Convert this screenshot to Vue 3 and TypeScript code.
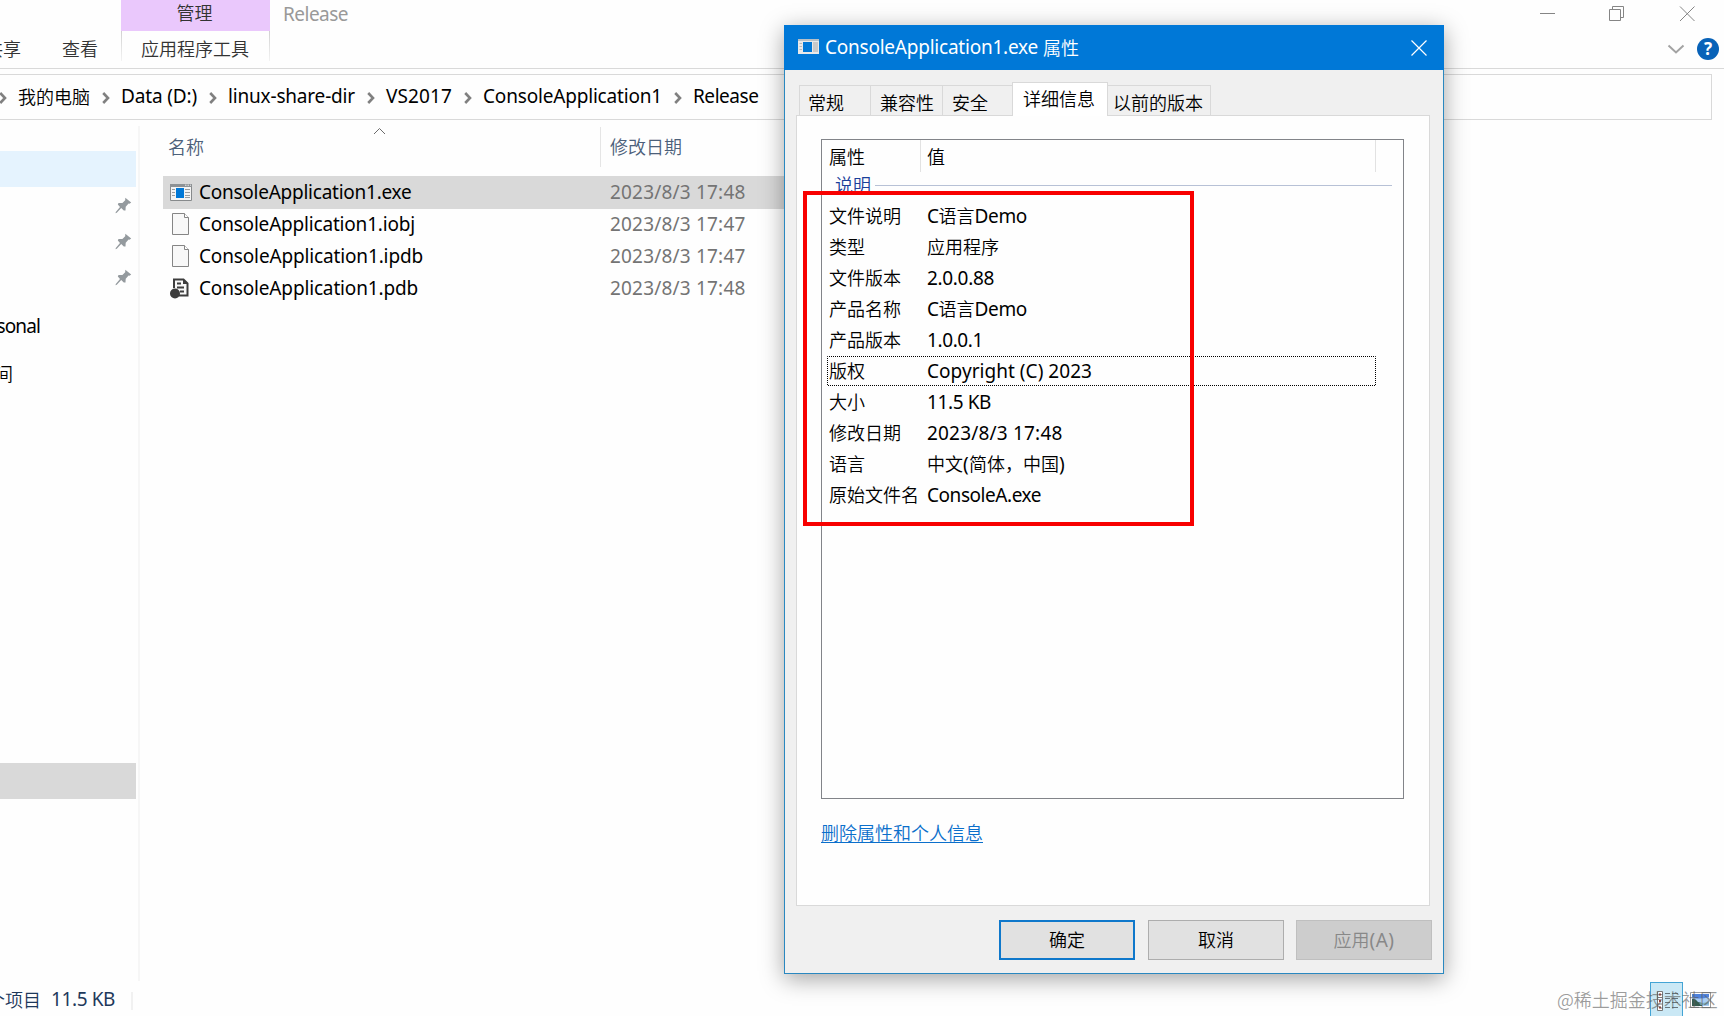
<script setup lang="ts">
interface Crumb { text: string; width: number; cjk?: boolean }
interface FileRow { name: string; width: number; date: string; kind: 'exe' | 'blank' | 'pdb'; selected?: boolean }
interface Part { text: string; width?: number }
interface Property { label: string; value: Part[]; focused?: boolean }

// Spreads or tightens letters so that a label takes the given advance width.
const vFit = {
  mounted(el: HTMLElement, binding: { value?: number }) {
    if (!binding.value) return
    const natural = el.getBoundingClientRect().width
    const count = (el.textContent ?? '').length
    el.style.letterSpacing = `${(binding.value - natural) / count}px`
  },
}

const crumbs: Crumb[] = [
  { text: '我的电脑', width: 72, cjk: true },
  { text: 'Data (D:)', width: 76 },
  { text: 'linux-share-dir', width: 127 },
  { text: 'VS2017', width: 66 },
  { text: 'ConsoleApplication1', width: 179 },
  { text: 'Release', width: 65.5 },
]

const files: FileRow[] = [
  { name: 'ConsoleApplication1.exe', width: 212.5, date: '2023/8/3 17:48', kind: 'exe', selected: true },
  { name: 'ConsoleApplication1.iobj', width: 216, date: '2023/8/3 17:47', kind: 'blank' },
  { name: 'ConsoleApplication1.ipdb', width: 224, date: '2023/8/3 17:47', kind: 'blank' },
  { name: 'ConsoleApplication1.pdb', width: 219, date: '2023/8/3 17:48', kind: 'pdb' },
]

const tabs = [
  { text: '常规', cls: 't1' },
  { text: '兼容性', cls: 't2' },
  { text: '安全', cls: 't3' },
  { text: '详细信息', cls: 'active' },
  { text: '以前的版本', cls: 't5' },
]

const properties: Property[] = [
  { label: '文件说明', value: [{ text: 'C', width: 11.5 }, { text: '语言' }, { text: 'Demo', width: 52.5 }] },
  { label: '类型', value: [{ text: '应用程序' }] },
  { label: '文件版本', value: [{ text: '2.0.0.88', width: 67 }] },
  { label: '产品名称', value: [{ text: 'C', width: 11.5 }, { text: '语言' }, { text: 'Demo', width: 52.5 }] },
  { label: '产品版本', value: [{ text: '1.0.0.1', width: 56 }] },
  { label: '版权', value: [{ text: 'Copyright (C) 2023', width: 165 }], focused: true },
  { label: '大小', value: [{ text: '11.5 KB', width: 64 }] },
  { label: '修改日期', value: [{ text: '2023/8/3 17:48', width: 135.5 }] },
  { label: '语言', value: [{ text: '中文' }, { text: '(', width: 6 }, { text: '简体，中国' }, { text: ')', width: 6 }] },
  { label: '原始文件名', value: [{ text: 'ConsoleA.exe', width: 114 }] },
]
</script>

<template>
  <div class="screen">
    <header class="ribbon">
      <div class="ribbon-left">
        <span class="share">共享</span>
        <span class="view">查看</span>
      </div>
      <div class="context">
        <div class="manage">管理</div>
        <div class="tools">应用程序工具</div>
      </div>
      <div class="title"><span v-fit="65" class="en">Release</span></div>
      <div class="controls">
        <div class="window-controls">
          <svg width="155" height="16" viewBox="0 0 155 16" fill="none" stroke="#858585">
            <path d="M0 7.500H15M69.500 3.500H80.500V14.500H69.500ZM72.500 3V.5H83.500V11.500H81" />
            <path d="M140 .5L154.500 15M154.500 .5L140 15" />
          </svg>
        </div>
        <div class="help-row">
          <svg width="18" height="11" viewBox="0 0 18 11"><path d="M1.500 1.500L9 8.500L16.500 1.500" fill="none" stroke="#a3a3a3" stroke-width="2" /></svg>
          <span class="help">?</span>
        </div>
      </div>
    </header>

    <nav class="address">
      <template v-for="c in crumbs" :key="c.text">
        <svg class="sep" width="8" height="12" viewBox="0 0 8 12"><path d="M1.200 1L6 6L1.200 11" fill="none" stroke="#808080" stroke-width="2.600" /></svg>
        <span v-fit="c.width" :class="c.cjk ? 'cn' : 'en'">{{ c.text }}</span>
      </template>
    </nav>

    <div class="body">
      <aside class="tree">
        <div class="hot"></div>
        <div v-for="n in 3" :key="n" class="pin-row">
          <svg width="17" height="17" viewBox="0 0 17 17" fill="#949a9e">
            <path d="M10.300 .7L16.200 5.500L14.500 6.700L13.600 6.500L10.700 9.800L10.500 13.400L8.800 13.600L6.200 11.100L1.800 15.800L.5 16.300L.8 15L5 10L2.800 7.400L3.500 5.900L7.400 5.900L10.200 3.200Z" />
          </svg>
        </div>
        <div class="node personal"><span v-fit="71" class="en">Personal</span></div>
        <div class="node space"><span>空间</span></div>
        <div class="selected-node"></div>
      </aside>
      <main class="files">
        <div class="columns">
          <div class="col-name">
            <span>名称</span>
            <svg class="caret" width="13" height="8" viewBox="0 0 13 8"><path d="M1 7L6.500 1.500L12 7" fill="none" stroke="#6b6b6b" /></svg>
          </div>
          <div class="col-date">修改日期</div>
        </div>
        <div v-for="f in files" :key="f.name" class="file" :class="{ chosen: f.selected }">
          <div class="file-icon">
            <svg v-if="f.kind === 'exe'" width="22" height="17" viewBox="0 0 22 17">
              <path d="M.5 .5H21.500V16.500H.5Z" fill="#f4f4f4" stroke="#878a8c" />
              <path d="M0 0H22V3H0Z" fill="#8e9295" />
              <path d="M15 1.200H16.500M17.500 1.200H19M20 1.200H21" stroke="#eee" />
              <path d="M2 5.500H5M2 8.500H5M2 11.500H5M15 5.500H20M15 8.500H20M15 11.500H20M15 13.500H20" stroke="#9a9da0" />
              <path d="M6 4H14V14H6Z" fill="#0078d7" />
            </svg>
            <svg v-else-if="f.kind === 'blank'" width="22" height="22" viewBox="0 0 22 22">
              <path d="M2.500 .5H14.500L18.500 4.500V21.500H2.500Z" fill="#f8f8f8" stroke="#858585" />
              <path d="M14.500 .5V4.500H18.500" fill="#fff" stroke="#858585" />
            </svg>
            <svg v-else width="22" height="22" viewBox="0 0 22 22">
              <path d="M4 11V2.500H13.500L17.500 6.500V18.500H9" fill="#f8f8f8" stroke="#3d3d3d" stroke-width="2" />
              <path d="M13 2V7H18L13 2Z" fill="#3d3d3d" />
              <path d="M7 6.500H11M7 10.500H14M10 14.500H14" stroke="#3d3d3d" stroke-width="1.800" />
              <circle cx="5" cy="16.500" r="5" fill="#3d3d3d" />
            </svg>
          </div>
          <div class="file-name"><span v-fit="f.width" class="en">{{ f.name }}</span></div>
          <div class="file-date"><span v-fit="135.500" class="en">{{ f.date }}</span></div>
        </div>
      </main>
    </div>

    <footer class="status">
      <span class="count">个项目</span>
      <span class="size"><span v-fit="64" class="en">11.5 KB</span></span>
      <i class="status-sep"></i>
      <div class="modes">
        <div class="details-mode">
          <svg width="24" height="22" viewBox="0 0 24 22">
            <path d="M1.500 1.500H6.500V20.500H1.500ZM1.500 7.500H6.500M1.500 14H6.500" fill="#fff" stroke="#777" />
            <path d="M3 4.500H5M3 11H5M3 17.500H5" stroke="#a33d32" stroke-width="2" />
            <path d="M9 3.500H14M16 3.500H22M9 8.500H14M16 8.500H22M9 12.500H14M16 12.500H22M9 17.500H14M16 17.500H22" stroke="#66747b" />
          </svg>
        </div>
        <svg class="picture" width="21" height="16" viewBox="0 0 21 16">
          <path d="M.5 .5H20.500V15.500H.5Z" fill="#fff" stroke="#999" />
          <path d="M2 2H19V14H2Z" fill="#a9cdf4" />
          <path d="M2 2H19V5Q9 8 2 5Z" fill="#4f83dc" />
          <path d="M2 7Q5 6 8 10L12 11V14H2Z" fill="#345c50" />
          <path d="M9 11.500L19 10V12.500L11 13Z" fill="#7fb0c4" />
        </svg>
      </div>
    </footer>
    <div class="watermark">@稀土掘金技术社区</div>

    <section class="dialog">
      <div class="caption">
        <svg class="app-icon" width="21" height="15" viewBox="0 0 21 15">
          <path d="M0 0H21V15H0Z" fill="#e9e9e9" />
          <path d="M0 0H21V2H0Z" fill="#b7c0c7" />
          <path d="M1.500 4.500H4M1.500 7.500H4M1.500 10.500H4" stroke="#b8b8b8" />
          <path d="M15 3H20V13H15Z" fill="#c9c9c9" />
          <path d="M5 3H14V13H5Z" fill="#0078d7" />
        </svg>
        <span v-fit="213" class="en">ConsoleApplication1.exe</span><span class="caption-cn">属性</span>
        <svg class="close" width="16" height="16" viewBox="0 0 16 16"><path d="M.5 .5L15.500 15.500M15.500 .5L.5 15.500" stroke="#fff" stroke-width="1.200" /></svg>
      </div>
      <div class="tabs">
        <div v-for="t in tabs" :key="t.text" class="tab" :class="t.cls">{{ t.text }}</div>
      </div>
      <div class="panel">
        <div class="list">
          <div class="list-head"><div class="h-prop">属性</div><div class="h-value">值</div></div>
          <div class="group"><span>说明</span><i></i></div>
          <div v-for="p in properties" :key="p.label" class="prop" :class="{ focused: p.focused }">
            <div class="label">{{ p.label }}</div>
            <div class="value"><span v-for="(v, i) in p.value" :key="i" v-fit="v.width" :class="v.width ? 'en' : 'cn'">{{ v.text }}</span></div>
            <svg v-if="p.focused" class="focus" width="549" height="30"><rect x=".5" y=".5" width="548" height="29" fill="none" stroke="#000" stroke-dasharray="1 1" stroke-dashoffset=".5" /></svg>
          </div>
        </div>
        <a class="remove">删除属性和个人信息</a>
      </div>
      <div class="buttons">
        <button class="ok">确定</button>
        <button>取消</button>
        <button class="disabled" disabled>应用<span v-fit="25" class="en">(A)</span></button>
      </div>
      <div class="mark"></div>
    </section>
  </div>
</template>

<style>
body { margin: 0; overflow: hidden; background: #fefefe; }
</style>

<style scoped>
.screen {
  position: relative; width: 1724px; height: 1016px; overflow: hidden;
  display: flex; flex-direction: column; background: #fefefe; color: #000;
  font: 18px/24px "Noto Sans CJK SC DemiLight", "Noto Sans CJK SC", sans-serif; white-space: pre;
}
.screen * { box-sizing: border-box; }
svg { display: block; flex: none; }
.en { font-family: "Noto Sans", "Noto Sans CJK SC", sans-serif; font-size: 19px; line-height: 24px; }

.ribbon { height: 69px; display: flex; border-bottom: 1px solid #d9d9d9; color: #333; }
.ribbon-left { width: 121px; padding-top: 36px; display: flex; }
.share { width: 36px; margin-left: -15px; }
.view { margin-left: 41px; }
.context { width: 149px; }
.manage { height: 31px; background: #eac8fc; text-align: center; line-height: 24px; padding-right: 2px; }
.tools {
  height: 30px; text-align: center; padding: 5px 1px 0 0;
  border: 1px solid; border-width: 0 1px; border-image: linear-gradient(#d0d0d0, #f4f4f4) 1;
}
.title { padding: 1px 0 0 13px; color: #999; }
.controls { margin-left: auto; width: 199px; }
.window-controls { padding: 6px 0 0 15px; }
.help-row { display: flex; align-items: center; gap: 12px; padding: 16px 0 0 142px; }
.help {
  width: 22px; height: 22px; border-radius: 50%; background: #0862b8; color: #fff;
  font: bold 17px/22px "Noto Sans", sans-serif; text-align: center;
}

.address {
  height: 46px; width: 1713px; margin: 5px 0 0 -1px; border: 1px solid #d9d9d9;
  display: flex; align-items: center;
}
.address .sep { margin: 1px 11px 0 12px; }
.address .sep:first-child { margin-left: -1px; margin-right: 11px; }
.address .en { line-height: 22px; padding-bottom: 3px; }
.address .cn { padding-bottom: 2px; }

.body { display: flex; height: 862px; }
.tree { width: 140px; height: 855px; margin-top: 6px; padding-top: 25px; border-right: 2px solid #f6f6f6; overflow: hidden; }
.hot { width: 136px; height: 36px; background: #e5f3fe; }
.pin-row { height: 36px; padding: 10px 0 0 115px; }
.node { width: 40px; height: 24px; display: flex; justify-content: flex-end; }
.personal { margin-top: 19px; }
.space { width: 13px; margin-top: 23px; }
.selected-node { width: 136px; height: 36px; margin-top: 378px; background: #d9d9d9; }

.files { width: 645px; padding-left: 23px; }
.columns { display: flex; height: 56px; color: #4c607a; padding-top: 7px; }
.col-name { width: 438px; height: 40px; padding: 7px 0 0 5px; border-right: 1px solid #e5e5e5; display: flex; }
.caret { margin: -7px 0 0 169px; }
.col-date { padding: 7px 0 0 9px; }
.file { height: 32px; display: flex; align-items: center; }
.file.chosen { height: 33px; background: #d9d9d9; margin-bottom: -1px; }
.file-icon { width: 22px; margin-left: 7px; }
.file-name { width: 417px; padding: 0 0 2px 7px; }
.file-date { color: #747474; padding-bottom: 2px; margin-left: 1px; }

.status { height: 34px; margin-top: auto; display: flex; color: #1e395b; }
.count { margin: 5px 0 0 -13px; width: 54px; }
.size { margin: 4px 0 0 10px; width: 80px; }
.status-sep { width: 2px; height: 18px; margin-top: 10px; background: #f1f1f1; }
.modes { margin-left: auto; width: 74px; display: flex; }
.details-mode { width: 33px; height: 35px; padding: 7px 0 0 5px; border: 1px solid #43a4d5; background: #cae8f5; }
.picture { margin: 10px 0 0 7px; }
.watermark { position: absolute; left: 1557px; top: 987px; color: rgba(90, 90, 90, .6); font-weight: 300; font-size: 18px; }

.dialog {
  position: absolute; left: 784px; top: 25px; width: 660px; height: 949px;
  border: 1px solid #2a88c0; border-top: 0; background: #f0f0f0;
  box-shadow: 0 5px 22px rgba(0, 0, 0, .36);
}
.caption { height: 45px; margin: 0 -1px; padding: 0 17px 2px 14px; background: #0078d7; color: #fff; display: flex; align-items: center; }
.app-icon { margin-right: 6px; }
.caption-cn { margin-left: 5px; }
.close { margin-left: auto; margin-top: 2px; }
.tabs { display: flex; align-items: flex-end; height: 46px; padding-left: 14px; margin-bottom: -1px; position: relative; }
.tab { height: 31px; border: 1px solid #d9d9d9; border-left: 0; padding: 4px 0 0 9px; }
.t1 { width: 72px; border-left: 1px solid #d9d9d9; padding-left: 8px; }
.t2 { width: 72px; padding-left: 9px; }
.t3 { width: 69px; border-right: 0; padding-left: 9px; }
.active { width: 96px; height: 34px; border-left: 1px solid #d9d9d9; border-bottom: 0; background: #fff; padding: 3px 0 0 10px; }
.t5 { width: 103px; padding-left: 5px; }
.panel { width: 634px; height: 791px; margin-left: 11px; padding: 23px 0 0 24px; border: 1px solid #d9d9d9; background: #fefefe; }
.list { width: 583px; height: 660px; border: 1px solid #828489; }
.list-head { height: 32px; display: flex; }
.h-prop { width: 99px; padding: 4px 0 0 7px; border-right: 1px solid #e2e2e2; }
.h-value { width: 455px; padding: 4px 0 0 6px; border-right: 1px solid #e2e2e2; }
.group { height: 20px; display: flex; overflow: hidden; padding-left: 13px; color: #1a3f9a; }
.group span { width: 40px; }
.group i { width: 517px; height: 1px; margin-top: 13px; background: #b7c1d6; }
.prop { position: relative; height: 31px; display: flex; top: 9px; }
.label { width: 105px; padding: 2px 0 0 7px; }
.value { padding-top: 2px; }
.focus { position: absolute; left: 5px; top: 0; }
.remove { display: inline-block; margin-top: 21px; color: #0b6fcb; text-decoration: underline; text-underline-offset: 2px; text-decoration-thickness: 1px; }
.buttons { display: flex; justify-content: flex-end; gap: 13px; padding: 14px 11px 0 0; }
button {
  width: 136px; height: 40px; padding: 0 0 2px; border: 1px solid #adadad; background: #e1e1e1;
  color: #000; font: 18px/24px "Noto Sans CJK SC DemiLight", "Noto Sans CJK SC", sans-serif;
}
.ok { border: 2px solid #0f78cb; }
.disabled { color: #888; background: #cdcdcd; border-color: #bfbfbf; margin-left: -1px; }
.mark { position: absolute; left: 18px; top: 166px; width: 391px; height: 335px; border: 4px solid #f80000; }
</style>
